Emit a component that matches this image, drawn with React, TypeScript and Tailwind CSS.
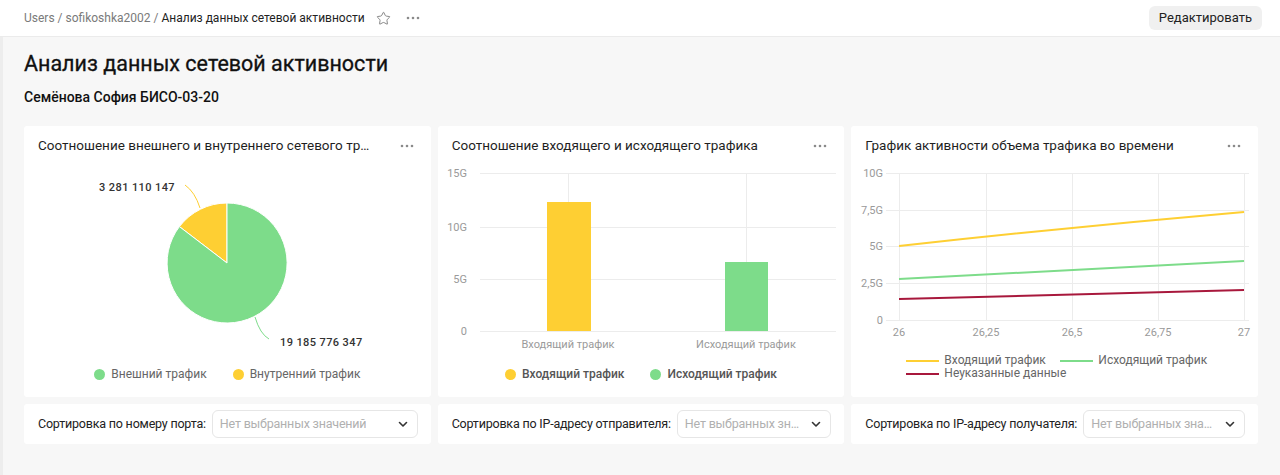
import { Star } from 'lucide-react';

const YELLOW = '#fecf33';
const GREEN = '#7ddc8a';
const RED = '#a8183c';

function Dots() {
  return (
    <svg width="14" height="4" viewBox="0 0 14 4" className="shrink-0">
      <circle cx="2" cy="2" r="1.3" fill="#8a8a8a" />
      <circle cx="7" cy="2" r="1.3" fill="#8a8a8a" />
      <circle cx="12" cy="2" r="1.3" fill="#8a8a8a" />
    </svg>
  );
}

function CardHeader({ title }: { title: string }) {
  return (
    <div className="flex h-[38px] items-center justify-between gap-[26px] pl-[14px] pr-[17px] pt-[1px]">
      <span className="truncate text-[13.5px] text-[#1f1f1f]">{title}</span>
      <Dots />
    </div>
  );
}

function LegendDot({ color, label, dark }: { color: string; label: string; dark?: boolean }) {
  return (
    <div className="flex items-center gap-[6px]">
      <span className="h-[11px] w-[11px] rounded-full" style={{ background: color }} />
      <span className={dark ? 'font-medium text-[#555]' : 'text-[#666]'}>{label}</span>
    </div>
  );
}

function PieCard() {
  const cx = 203;
  const cy = 99;
  const r = 60;
  const ex = cx - 47.6;
  const ey = cy - 36.4;
  return (
    <div className="flex h-[271px] flex-col rounded-[3px] bg-white">
      <CardHeader title="Соотношение внешнего и внутреннего сетевого трафика" />
      <svg width="407" height="200" className="block">
        <path d={`M${cx},${cy} L${cx},${cy - r} A${r},${r} 0 0 0 ${ex},${ey} Z`} fill={YELLOW} stroke="#fff" strokeWidth="1" />
        <path d={`M${cx},${cy} L${ex},${ey} A${r},${r} 0 1 0 ${cx},${cy - r} Z`} fill={GREEN} stroke="#fff" strokeWidth="1" />
        <path d="M161,21 Q171,28 176,44" fill="none" stroke={YELLOW} strokeWidth="1" />
        <path d="M231,153 Q236,170 245,175" fill="none" stroke={GREEN} strokeWidth="1" />
        <text x="151" y="27" textAnchor="end" fontSize="11" fontWeight="500" fill="#333" letterSpacing="0.4">
          3 281 110 147
        </text>
        <text x="256" y="182" fontSize="11" fontWeight="500" fill="#333" letterSpacing="0.4">
          19 185 776 347
        </text>
      </svg>
      <div className="flex h-[20px] items-center justify-center gap-[26px] text-[12px]">
        <LegendDot color={GREEN} label="Внешний трафик" />
        <LegendDot color={YELLOW} label="Внутренний трафик" />
      </div>
    </div>
  );
}

function BarCard() {
  const grid = [
    { y: 9, l: '15G' },
    { y: 63, l: '10G' },
    { y: 115, l: '5G' },
    { y: 167, l: '0' },
  ];
  return (
    <div className="flex h-[271px] flex-col rounded-[3px] bg-white">
      <CardHeader title="Соотношение входящего и исходящего трафика" />
      <svg width="407" height="200" className="block">
        {grid.map((g) => (
          <g key={g.l}>
            <line x1="42" x2="398" y1={g.y + 0.5} y2={g.y + 0.5} stroke="#ececec" />
            <text x="29" y={g.y + 4} textAnchor="end" fontSize="11" fill="#9a9a9a">
              {g.l}
            </text>
          </g>
        ))}
        <line x1="130.5" x2="130.5" y1="9" y2="167" stroke="#ececec" />
        <line x1="308.5" x2="308.5" y1="9" y2="167" stroke="#ececec" />
        <rect x="109" y="38" width="44" height="129" fill={YELLOW} />
        <rect x="287" y="98" width="43" height="69" fill={GREEN} />
        <text x="130" y="184" textAnchor="middle" fontSize="11" fill="#9a9a9a">
          Входящий трафик
        </text>
        <text x="308" y="184" textAnchor="middle" fontSize="11" fill="#9a9a9a">
          Исходящий трафик
        </text>
      </svg>
      <div className="flex h-[20px] items-center justify-center gap-[26px] text-[12px]">
        <LegendDot color={YELLOW} label="Входящий трафик" dark />
        <LegendDot color={GREEN} label="Исходящий трафик" dark />
      </div>
    </div>
  );
}

function LineCard() {
  const ys = [
    { y: 9, l: '10G' },
    { y: 46, l: '7,5G' },
    { y: 82, l: '5G' },
    { y: 119, l: '2,5G' },
    { y: 156, l: '0' },
  ];
  const xs = [
    { x: 48, l: '26' },
    { x: 135, l: '26,25' },
    { x: 221, l: '26,5' },
    { x: 307, l: '26,75' },
    { x: 393, l: '27' },
  ];
  return (
    <div className="flex h-[271px] flex-col rounded-[3px] bg-white">
      <CardHeader title="График активности объема трафика во времени" />
      <svg width="407" height="190" className="block">
        {ys.map((g) => (
          <g key={g.l}>
            <line x1="35" x2="398" y1={g.y + 0.5} y2={g.y + 0.5} stroke="#ececec" />
            <text x="32" y={g.y + 4} textAnchor="end" fontSize="11" fill="#9a9a9a">
              {g.l}
            </text>
          </g>
        ))}
        {xs.map((g) => (
          <g key={g.l}>
            <line x1={g.x + 0.5} x2={g.x + 0.5} y1="9" y2="156" stroke="#ececec" />
            <text x={g.x} y="172" textAnchor="middle" fontSize="11" fill="#9a9a9a">
              {g.l}
            </text>
          </g>
        ))}
        <path d="M48,82 Q220,63 393,48" fill="none" stroke={YELLOW} strokeWidth="2" />
        <path d="M48,115 Q220,106 393,97" fill="none" stroke={GREEN} strokeWidth="2" />
        <path d="M48,135 Q220,131 393,126" fill="none" stroke={RED} strokeWidth="2" />
      </svg>
      <div className="flex flex-col pl-[55px] text-[12px] leading-[13px] text-[#666]">
        <div className="flex items-center">
          <span className="h-[2px] w-[33px]" style={{ background: YELLOW }} />
          <span className="ml-[5px] w-[116px]">Входящий трафик</span>
          <span className="h-[2px] w-[33px]" style={{ background: GREEN }} />
          <span className="ml-[5px]">Исходящий трафик</span>
        </div>
        <div className="flex items-center">
          <span className="h-[2px] w-[33px]" style={{ background: RED }} />
          <span className="ml-[5px]">Неуказанные данные</span>
        </div>
      </div>
    </div>
  );
}

function FilterCard({ label, placeholder }: { label: string; placeholder: string }) {
  return (
    <div className="flex h-[40px] items-center gap-[6px] rounded-[3px] bg-white pl-[14px] pr-[13px]">
      <span className="shrink-0 text-[12.5px] tracking-[-0.2px] text-[#222]">{label}</span>
      <div className="flex h-[28px] min-w-0 flex-1 items-center justify-between rounded-[6px] border border-[#e6e6e6] pl-[7px] pr-[8px]">
        <span className="truncate text-[12.5px] tracking-[-0.2px] text-[#b0b0b0]">{placeholder}</span>
        <svg width="12" height="12" viewBox="0 0 12 12" className="ml-2 shrink-0">
          <path d="M2.5,4.5 L6,8 L9.5,4.5" fill="none" stroke="#333" strokeWidth="1.6" strokeLinecap="round" strokeLinejoin="round" />
        </svg>
      </div>
    </div>
  );
}

export default function App() {
  return (
    <div className="flex h-[475px] w-[1280px] flex-col overflow-hidden bg-[#f7f7f7]" style={{ fontFamily: 'Roboto, "Open Sans", sans-serif' }}>
      <header className="flex h-[37px] shrink-0 items-center justify-between border-b border-[#ebebeb] bg-white pl-6 pr-[18px]">
        <div className="flex items-center text-[12px]">
          <span className="text-[#7a7a7a]">Users / sofikoshka2002 /&nbsp;</span>
          <span className="text-[#222]">Анализ данных сетевой активности</span>
          <Star size={15} strokeWidth={1.4} className="ml-[11px] text-[#777]" />
          <span className="ml-[15px]">
            <Dots />
          </span>
        </div>
        <button className="h-[24px] rounded-[6px] bg-[#f0f0f0] px-[10px] text-[13px] text-[#222]">Редактировать</button>
      </header>
      <main className="flex-1 border-l-[3px] border-[#ededed] pl-[21px] pr-[22px]">
        <h1 className="pt-[13px] text-[21.5px] leading-[28px] text-[#111] [-webkit-text-stroke:0.3px_#111]">
          Анализ данных сетевой активности
        </h1>
        <p className="mt-[9px] text-[14px] font-medium leading-[20px] text-[#111]">Семёнова София БИСО-03-20</p>
        <div className="mt-[19px] grid grid-cols-3 gap-[7px]">
          <PieCard />
          <BarCard />
          <LineCard />
          <FilterCard label="Сортировка по номеру порта:" placeholder="Нет выбранных значений" />
          <FilterCard label="Сортировка по IP-адресу отправителя:" placeholder="Нет выбранных значений" />
          <FilterCard label="Сортировка по IP-адресу получателя:" placeholder="Нет выбранных значений" />
        </div>
      </main>
    </div>
  );
}
